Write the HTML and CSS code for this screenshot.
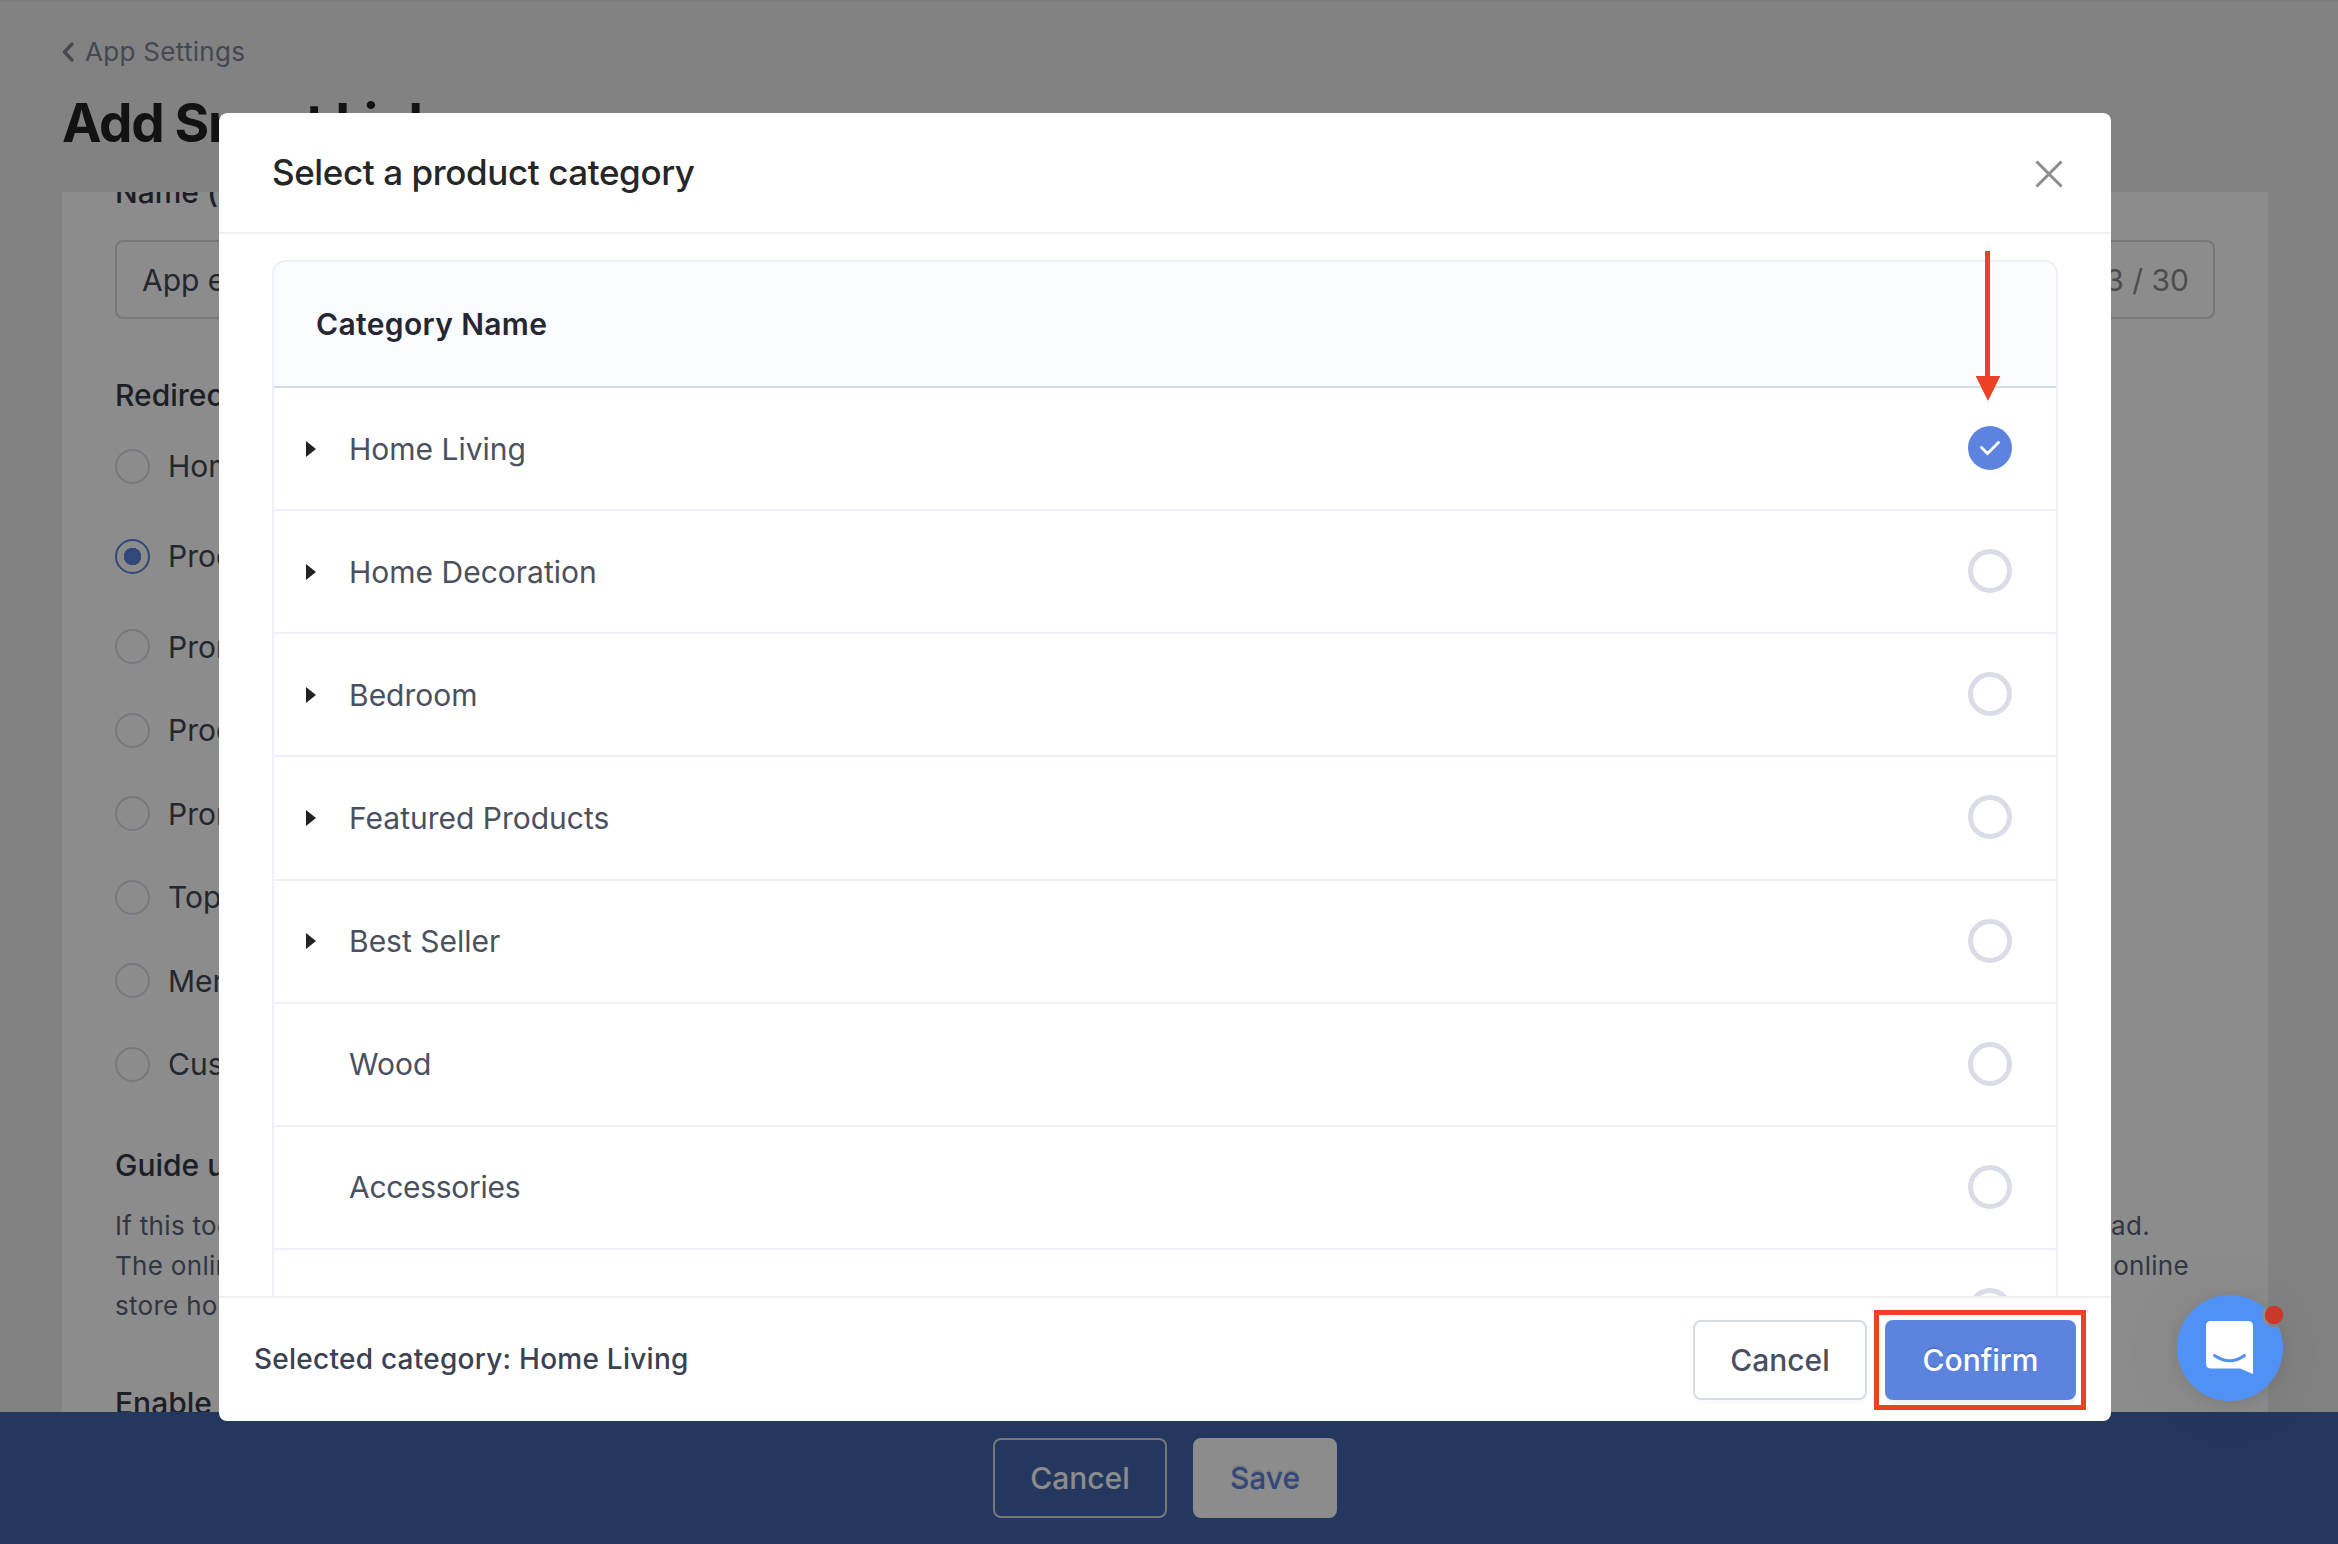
FILE: index.html
```html
<!DOCTYPE html>
<html lang="en">
<head>
    <meta charset="UTF-8">
    <title>Add Smart Link</title>
    <link rel="stylesheet" href="styles.css">
</head>
<body>
    <div class="page">
        <header class="page-header">
            <a class="back">
                <svg width="12" height="20" viewBox="0 0 12 20"><path d="M10 2L2.5 10L10 18" fill="none" stroke="currentColor" stroke-width="3.4" stroke-linecap="round" stroke-linejoin="round"/></svg>
                <span>App Settings</span>
            </a>
            <h1>Add Smart Link</h1>
        </header>

        <main class="card">
            <div class="label name-label">Name (required)</div>
            <div class="input"><span>App exclusive</span><span class="count">13 / 30</span></div>

            <div class="label redirect-label">Redirect to</div>
            <div class="radios">
                <div class="radio tall"><i></i>Homepage</div>
                <div class="radio tall selected-radio"><i class="on"></i>Product category</div>
                <div class="radio"><i></i>Promotion page</div>
                <div class="radio"><i></i>Product page</div>
                <div class="radio"><i></i>Promotion list</div>
                <div class="radio"><i></i>Topic page</div>
                <div class="radio"><i></i>Member center</div>
                <div class="radio"><i></i>Custom page</div>
            </div>

            <div class="label guide-label">Guide users</div>
            <div class="help">
                <div class="help-line first"><span>If this toggle</span><span>download.</span></div>
                <div class="help-line"><span>The online store</span><span>online</span></div>
                <div class="help-line"><span>store home</span></div>
            </div>
            <div class="label enable-label">Enable link</div>
        </main>

        <footer class="save-bar">
            <button class="btn btn-outline">Cancel</button>
            <button class="btn btn-save">Save</button>
        </footer>
    </div>

    <div class="overlay">
        <div class="modal">
            <div class="modal-header">
                <h2>Select a product category</h2>
                <svg class="close" width="28" height="28" viewBox="0 0 28 28"><path d="M1.5 1.5L26.5 26.5M26.5 1.5L1.5 26.5" stroke="#8c8c8c" stroke-width="3"/></svg>
            </div>
            <div class="modal-body">
                <div class="table">
                    <div class="table-head">Category Name</div>
                    <div class="row"><b class="caret"></b><span>Home Living</span>
                        <i class="pick checked"><svg width="44" height="44" viewBox="0 0 44 44"><path d="M13.5 21.5L19.5 27.5L30.5 16.5" fill="none" stroke="#fff" stroke-width="2.8" stroke-linecap="round"/></svg></i>
                    </div>
                    <div class="row"><b class="caret"></b><span>Home Decoration</span><i class="pick"></i></div>
                    <div class="row"><b class="caret"></b><span>Bedroom</span><i class="pick"></i></div>
                    <div class="row"><b class="caret"></b><span>Featured Products</span><i class="pick"></i></div>
                    <div class="row"><b class="caret"></b><span>Best Seller</span><i class="pick"></i></div>
                    <div class="row"><b class="caret none"></b><span>Wood</span><i class="pick"></i></div>
                    <div class="row"><b class="caret none"></b><span class="tight">Accessories</span><i class="pick"></i></div>
                    <div class="row"><b class="caret none"></b><span></span><i class="pick"></i></div>
                </div>
            </div>
            <div class="modal-footer">
                <span class="selected">Selected category: Home Living</span>
                <button class="btn btn-cancel">Cancel</button>
                <button class="btn btn-confirm">Confirm</button>
            </div>
        </div>
    </div>

    <svg class="arrow" width="26" height="150" viewBox="0 0 26 150"><path d="M10 0H15V125H25.3L13 150L0.7 125H10Z" fill="#ec4125"/></svg>
    <div class="highlight"></div>

    <!-- chat launcher -->
    <div class="chat">
        <svg width="106" height="106" viewBox="0 0 106 106">
            <mask id="cut"><rect width="106" height="106" fill="#fff"/><circle cx="97" cy="20" r="12" fill="#000"/></mask>
            <circle cx="53" cy="53" r="53" fill="#5091f5" mask="url(#cut)"/>
            <path d="M34 26H71Q76 26 76 31V79L63 73.500H34Q29 73.500 29 68.500V31Q29 26 34 26Z" fill="#fff"/>
            <path d="M37.500 60.500Q53 71 67.500 60.500" fill="none" stroke="#5091f5" stroke-width="3" stroke-linecap="round"/>
            <circle cx="97" cy="20" r="9.200" fill="#ca382c"/>
        </svg>
    </div>
</body>
</html>
```

FILE: styles.css
```css
* {
    box-sizing: border-box;
}
body {
    margin: 0;
    height: 1544px;
    overflow: hidden;
    font-family: Inter, "Liberation Sans", sans-serif;
    font-size: 30px;
    line-height: 40px;
    background: #ededed;
}
h1, h2 {
    margin: 0;
}
.page {
    height: 1544px;
    display: flex;
    flex-direction: column;
    border-top: 2px solid #e4e4e4;
}
.page-header {
    height: 190px;
    padding: 30px 62px 0;
}
.back {
    display: flex;
    align-items: center;
    gap: 11px;
    font-size: 26px;
    letter-spacing: 0.3px;
    color: #7c8496;
}
h1 {
    margin-top: 20px;
    font-size: 53px;
    line-height: 63px;
    font-weight: 700;
    letter-spacing: -1.3px;
    color: #222;
}
.card {
    flex: 1;
    min-height: 0;
    overflow: hidden;
    margin: 0 70px 0 62px;
    padding: 0 53px;
    background: #fff;
    color: #434857;
}
.label {
    font-weight: 500;
    color: #363a48;
}
.name-label {
    margin-top: -20px;
}
.input {
    display: flex;
    justify-content: space-between;
    align-items: center;
    height: 79px;
    margin-top: 28px;
    padding: 0 24px 0 25px;
    border: 2px solid #d9d9d9;
    border-radius: 8px;
}
.count {
    color: #8c8c8c;
}
.redirect-label {
    margin-top: 56px;
}
.radios {
    margin-top: 6px;
}
.radio {
    display: flex;
    align-items: center;
    gap: 18px;
    height: 83.5px;
}
.radio.tall {
    height: 90px;
}
.selected-radio {
    margin-bottom: 4px;
}
.radio i {
    width: 35px;
    height: 35px;
    border: 2px solid #d6dde4;
    border-radius: 50%;
}
.radio i.on {
    border-color: #5c84df;
    background: radial-gradient(circle, #5c84df 8.500px, #fff 9px);
}
.guide-label {
    margin-top: 39px;
}
.help {
    margin-top: 21px;
    font-size: 26px;
    letter-spacing: 0.3px;
    color: #5a6378;
}
.help-line {
    display: flex;
    justify-content: space-between;
    padding-right: 26px;
}
.help-line.first {
    padding-right: 65px;
}
.enable-label {
    margin-top: 57px;
}
.save-bar {
    height: 132px;
    display: flex;
    justify-content: center;
    gap: 26px;
    padding-top: 26px;
    padding-right: 8px;
    background: #4164ad;
}
.btn {
    height: 80px;
    border-radius: 8px;
    border: 2px solid transparent;
    padding: 0;
    font: 500 30px/40px Inter, "Liberation Sans", sans-serif;
}
.btn-outline {
    width: 174px;
    background: transparent;
    border-color: #d9d9d9;
    color: #fff;
}
.btn-save {
    width: 144px;
    background: #fff;
    color: #5c84df;
    text-shadow: 0 -2px 0 rgba(0, 0, 0, 0.12);
}
.overlay {
    position: absolute;
    inset: 0;
    background: rgba(0, 0, 0, 0.45);
}
.modal {
    width: 1892px;
    height: 1308px;
    margin: 113px 0 0 219px;
    display: flex;
    flex-direction: column;
    overflow: hidden;
    border-radius: 8px;
    background: #fff;
}
.modal-header {
    height: 121px;
    flex: none;
    display: flex;
    align-items: center;
    justify-content: space-between;
    padding: 0 48px 0 53px;
    border-bottom: 2px solid #f0f0f0;
}
.close {
    margin-top: 3px;
}
h2 {
    margin-bottom: 2px;
    font-size: 35px;
    font-weight: 500;
    letter-spacing: -0.4px;
    color: #262626;
}
.modal-body {
    flex: 1;
    min-height: 0;
    overflow: hidden;
    padding: 26px 53px 0;
}
.table {
    border: 2px solid #edf0f8;
    border-radius: 14px 14px 0 0;
    overflow: hidden;
}
.table-head {
    height: 126px;
    padding: 42px 42px 0;
    background: #fbfcff;
    border-bottom: 2px solid #d4dce4;
    font-weight: 600;
    letter-spacing: 0.35px;
    color: #252733;
}
.row {
    display: flex;
    align-items: center;
    height: 123.15px;
    padding: 0 44px 0 32px;
    border-bottom: 2px solid #edf0f8;
    color: #4a5060;
}
.row span {
    flex: 1;
}
.row .tight {
    letter-spacing: -0.3px;
}
.caret {
    margin-right: 33px;
    border-left: 10px solid #222;
    border-top: 8px solid transparent;
    border-bottom: 8px solid transparent;
}
.caret.none {
    visibility: hidden;
}
.pick {
    width: 44px;
    height: 44px;
    margin-bottom: 1px;
    border: 5px solid #dadce7;
    border-radius: 50%;
}
.pick.checked {
    border: 0;
    background: #5c84df;
}
.pick svg {
    display: block;
}
.modal-footer {
    height: 125px;
    flex: none;
    display: flex;
    align-items: center;
    padding: 0 35px;
    border-top: 2px solid #f0f0f0;
}
.selected {
    flex: 1;
    margin-bottom: 2px;
    font-size: 28px;
    font-weight: 500;
    letter-spacing: 0.25px;
    color: #3a4150;
}
.btn-cancel {
    width: 174px;
    margin-right: 18px;
    background: #fff;
    border-color: #d4dce4;
    color: #4a5060;
    box-shadow: 0 4px 0 rgba(0, 0, 0, 0.015);
}
.btn-confirm {
    width: 191px;
    background: #5c84df;
    color: #fff;
    text-shadow: 0 -2px 0 rgba(0, 0, 0, 0.12);
    box-shadow: 0 4px 0 rgba(0, 0, 0, 0.045);
}
.arrow {
    position: absolute;
    left: 1975px;
    top: 251px;
}
.highlight {
    position: absolute;
    left: 1874px;
    top: 1310px;
    width: 212px;
    height: 100px;
    border: 5px solid #ec4125;
}
.chat {
    position: absolute;
    left: 2177px;
    top: 1295px;
    width: 106px;
    height: 106px;
    border-radius: 50%;
    box-shadow: 0 2px 12px rgba(0, 0, 0, 0.08), 0 4px 64px rgba(0, 0, 0, 0.08);
}
.chat svg {
    display: block;
}
```
